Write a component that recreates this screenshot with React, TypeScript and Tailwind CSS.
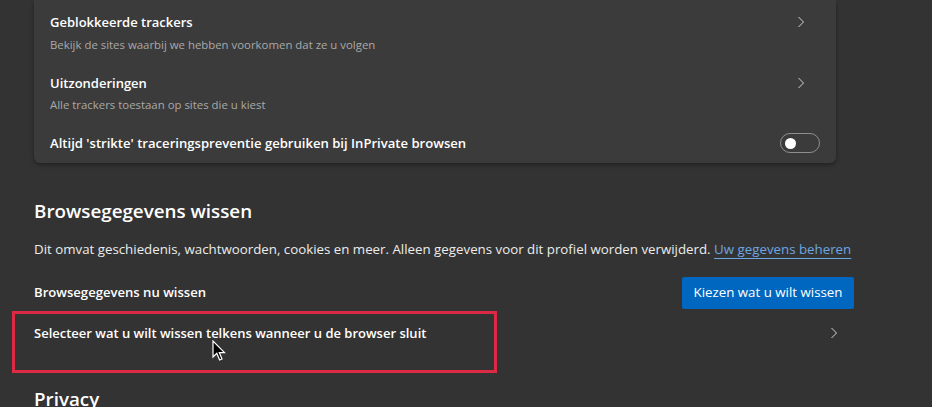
import React from "react";

const font = { fontFamily: '"Open Sans", "Noto Sans", sans-serif' };

function Chevron() {
  return (
    <svg width="8" height="12" viewBox="0 0 8 12" fill="none" className="shrink-0">
      <path d="M1.5 1 L6.5 6 L1.5 11" stroke="#d4d4d4" strokeWidth="1" />
    </svg>
  );
}

function Cursor() {
  return (
    <svg width="14" height="22" viewBox="0 0 14 22">
      <path
        d="M1 1 L1 17 L4.8 13.4 L7.6 20 L10 19 L7.3 12.6 L12.5 12.6 Z"
        fill="#000"
        stroke="#fff"
        strokeWidth="1.2"
        strokeLinejoin="miter"
      />
    </svg>
  );
}

export default function App() {
  return (
    <main
      className="relative w-[932px] h-[407px] overflow-hidden bg-[#333333] text-white antialiased"
      style={font}
    >
      {/* Tracking card (top cut off) */}
      <div className="ml-[34px] w-[802px] bg-[#3b3b3b] rounded-b-md shadow-[0_2px_4px_rgba(0,0,0,0.35)]">
        <div className="h-[63px] flex items-start justify-between pl-4 pr-[31px] pt-[12px]">
          <div>
            <div className="text-[13px] font-semibold leading-[20px]">Geblokkeerde trackers</div>
            <div className="text-[11.4px] leading-[18px] mt-[4px] text-[#a9a9a9]">
              Bekijk de sites waarbij we hebben voorkomen dat ze u volgen
            </div>
          </div>
          <div className="h-5 flex items-center">
            <Chevron />
          </div>
        </div>
        <div className="h-[60px] flex items-start justify-between pl-4 pr-[31px] pt-[10px]">
          <div>
            <div className="text-[13px] font-semibold leading-[20px]">Uitzonderingen</div>
            <div className="text-[11.4px] leading-[18px] mt-[3px] text-[#a9a9a9]">
              Alle trackers toestaan op sites die u kiest
            </div>
          </div>
          <div className="h-5 flex items-center">
            <Chevron />
          </div>
        </div>
        <div className="h-[40px] flex items-start justify-between pl-4 pr-4 pt-[10px]">
          <div className="text-[13.1px] font-semibold leading-[20px]">
            Altijd 'strikte' traceringspreventie gebruiken bij InPrivate browsen
          </div>
          <div className="w-10 h-5 rounded-full border border-[#8f8f8f] flex items-center pl-[4px]">
            <div className="w-[11px] h-[11px] rounded-full bg-white" />
          </div>
        </div>
      </div>

      {/* Clear browsing data */}
      <section className="ml-[34px] w-[820px] pt-[34px]">
        <h2 className="text-[18.8px] font-semibold leading-[28px]">Browsegegevens wissen</h2>
        <p className="mt-[14px] text-[13.3px] leading-[20px] text-[#ececec] whitespace-nowrap">
          Dit omvat geschiedenis, wachtwoorden, cookies en meer. Alleen gegevens voor dit profiel worden verwijderd.{" "}
          <a className="text-[#6ea6e2] underline underline-offset-[4px] decoration-1">Uw gegevens beheren</a>
        </p>
        <div className="mt-[18px] h-[32px] flex items-center justify-between">
          <span className="text-[13.1px] font-semibold">Browsegegevens nu wissen</span>
          <button className="h-[32px] w-[172px] bg-[#0067c0] text-[13.3px] text-white rounded-[2px]">
            Kiezen wat u wilt wissen
          </button>
        </div>
        <div className="h-[48px] flex items-start justify-between pt-[14px] pr-[16px]">
          <span className="text-[13px] font-semibold leading-[20px]">
            Selecteer wat u wilt wissen telkens wanneer u de browser sluit
          </span>
          <div className="h-5 flex items-center">
            <Chevron />
          </div>
        </div>
        <h2 className="mt-[28px] text-[18.8px] font-semibold leading-[28px]">Privacy</h2>
      </section>

      {/* Annotation + cursor overlay */}
      <div className="absolute left-[12px] top-[311px] w-[485px] h-[62px] border-[3px] border-[#dc2a45] pointer-events-none" />
      <div className="absolute left-[212px] top-[340px]">
        <Cursor />
      </div>
    </main>
  );
}
